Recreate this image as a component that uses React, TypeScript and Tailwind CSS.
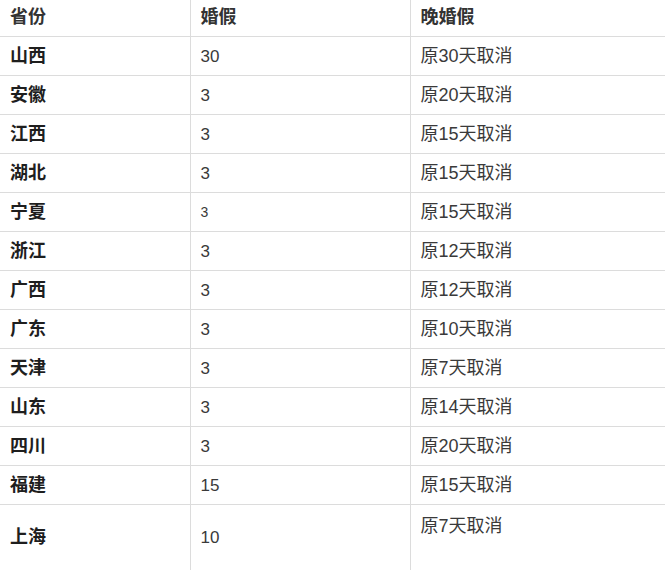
import React from "react";

const rows: { p: string; d: string; late: string; small?: boolean }[] = [
  { p: "山西", d: "30", late: "原30天取消" },
  { p: "安徽", d: "3", late: "原20天取消" },
  { p: "江西", d: "3", late: "原15天取消" },
  { p: "湖北", d: "3", late: "原15天取消" },
  { p: "宁夏", d: "3", late: "原15天取消", small: true },
  { p: "浙江", d: "3", late: "原12天取消" },
  { p: "广西", d: "3", late: "原12天取消" },
  { p: "广东", d: "3", late: "原10天取消" },
  { p: "天津", d: "3", late: "原7天取消" },
  { p: "山东", d: "3", late: "原14天取消" },
  { p: "四川", d: "3", late: "原20天取消" },
  { p: "福建", d: "15", late: "原15天取消" },
];

export default function App() {
  return (
    <div className="h-[570px] w-[665px] overflow-hidden bg-white font-['Liberation_Sans','Noto_Sans_CJK_SC',sans-serif] text-[18px] text-[#3a3a3a]">
      <table className="w-[665px] table-fixed border-collapse">
        <colgroup>
          <col className="w-[190px]" />
          <col className="w-[220px]" />
          <col className="w-[255px]" />
        </colgroup>
        <thead>
          <tr className="h-[36px] border-b border-[#dcdcdc] text-left text-[#333]">
            <th className="px-[10px] font-bold">省份</th>
            <th className="border-l border-[#dcdcdc] px-[10px] font-bold">婚假</th>
            <th className="border-l border-[#dcdcdc] px-[10px] font-bold">晚婚假</th>
          </tr>
        </thead>
        <tbody>
          {rows.map((r) => (
            <tr key={r.p} className="h-[39px] border-b border-[#dcdcdc]">
              <td className="px-[10px] pt-[2px] font-bold text-[#1e1e1e]">{r.p}</td>
              <td className={`border-l border-[#dcdcdc] px-[10px] pt-[2px] ${r.small ? "text-[14px]" : "text-[17px]"}`}>{r.d}</td>
              <td className="border-l border-[#dcdcdc] px-[10px] pt-[2px]">{r.late}</td>
            </tr>
          ))}
          <tr className="h-[67px]">
            <td className="px-[10px] align-middle font-bold text-[#1e1e1e]">上海</td>
            <td className="border-l border-[#dcdcdc] px-[10px] align-middle text-[17px]">10</td>
            <td className="border-l border-[#dcdcdc] px-[10px] pt-[8px] align-top">原7天取消</td>
          </tr>
        </tbody>
      </table>
    </div>
  );
}
